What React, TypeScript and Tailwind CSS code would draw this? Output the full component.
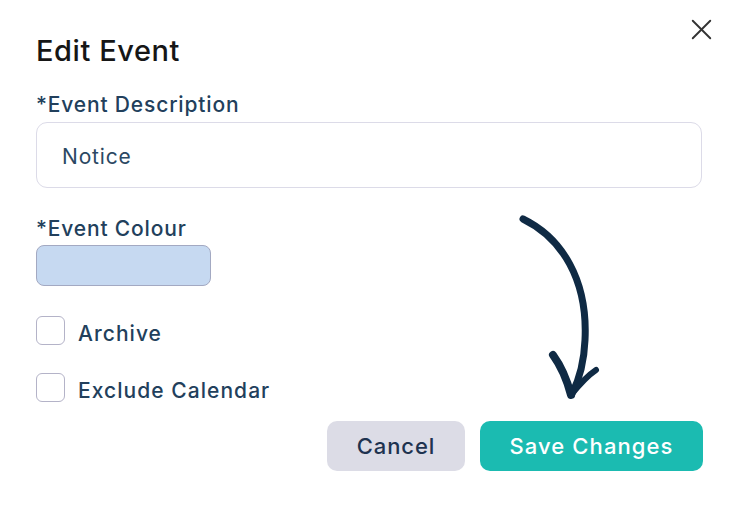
import { X } from "lucide-react"

const Checkbox: React.FC<{ label: string }> = ({ label }) => (
  <label className="flex items-center gap-[13px]">
    <span className="w-[29px] h-[29px] rounded-[6px] border-[1.5px] border-[#b4b3c8] bg-white" />
    <span className="pt-[6px] text-[21px] leading-[22px] font-medium tracking-[0.05em] text-[#22405c]">{label}</span>
  </label>
)

const Arrow = () => (
  <svg
    className="absolute left-[500px] top-[200px] pointer-events-none"
    width="120"
    height="210"
    viewBox="0 0 120 210"
    fill="none">
    <path
      d="M23 19 C 62 38, 88 80, 85 140 C 84 165, 78 182, 72 194"
      stroke="#0f2a44"
      strokeWidth="7"
      strokeLinecap="round"
    />
    <path
      d="M53 155 C 61 166, 67 180, 71 195"
      stroke="#0f2a44"
      strokeWidth="8"
      strokeLinecap="round"
    />
    <path
      d="M71 195 C 79 185, 87 176, 96 170"
      stroke="#0f2a44"
      strokeWidth="6"
      strokeLinecap="round"
    />
  </svg>
)

export default function App() {
  return (
    <div className="relative w-[740px] h-[506px] bg-white px-[36px] pt-[33px] font-['Inter',sans-serif]">
      <button className="absolute right-[21px] top-[12px] text-[#333]">
        <X size={35} strokeWidth={1.3} />
      </button>

      <h2 className="text-[29px] leading-[36px] font-medium tracking-[0.02em] text-[#161616]">Edit Event</h2>

      <div className="mt-[22px] text-[21px] leading-[28px] font-medium tracking-[0.04em] text-[#22405c]">
        *Event Description
      </div>
      <div className="mt-[3px] h-[66px] w-[666px] rounded-[11px] border border-[#dcdbe8] flex items-center px-[25px] pt-[3px]">
        <span className="text-[21px] tracking-[0.04em] text-[#2b4863]">Notice</span>
      </div>

      <div className="mt-[27px] text-[21px] leading-[28px] font-medium tracking-[0.04em] text-[#22405c]">
        *Event Colour
      </div>
      <div className="mt-[2px] h-[41px] w-[175px] rounded-[8px] border-[1.5px] border-[#a3a9c2] bg-[#c6d9f1]" />

      <div className="mt-[30px] flex flex-col gap-[28px]">
        <Checkbox label="Archive" />
        <Checkbox label="Exclude Calendar" />
      </div>

      <div className="mt-[19px] flex justify-end gap-[15px] w-[667px]">
        <button className="h-[50px] w-[138px] rounded-[10px] bg-[#dcdce6] text-[22px] font-medium tracking-[0.04em] text-[#1e3350]">
          Cancel
        </button>
        <button className="h-[50px] w-[223px] rounded-[10px] bg-[#1bbbb1] text-[22px] font-medium tracking-[0.05em] text-white">
          Save Changes
        </button>
      </div>

      <Arrow />
    </div>
  )
}
